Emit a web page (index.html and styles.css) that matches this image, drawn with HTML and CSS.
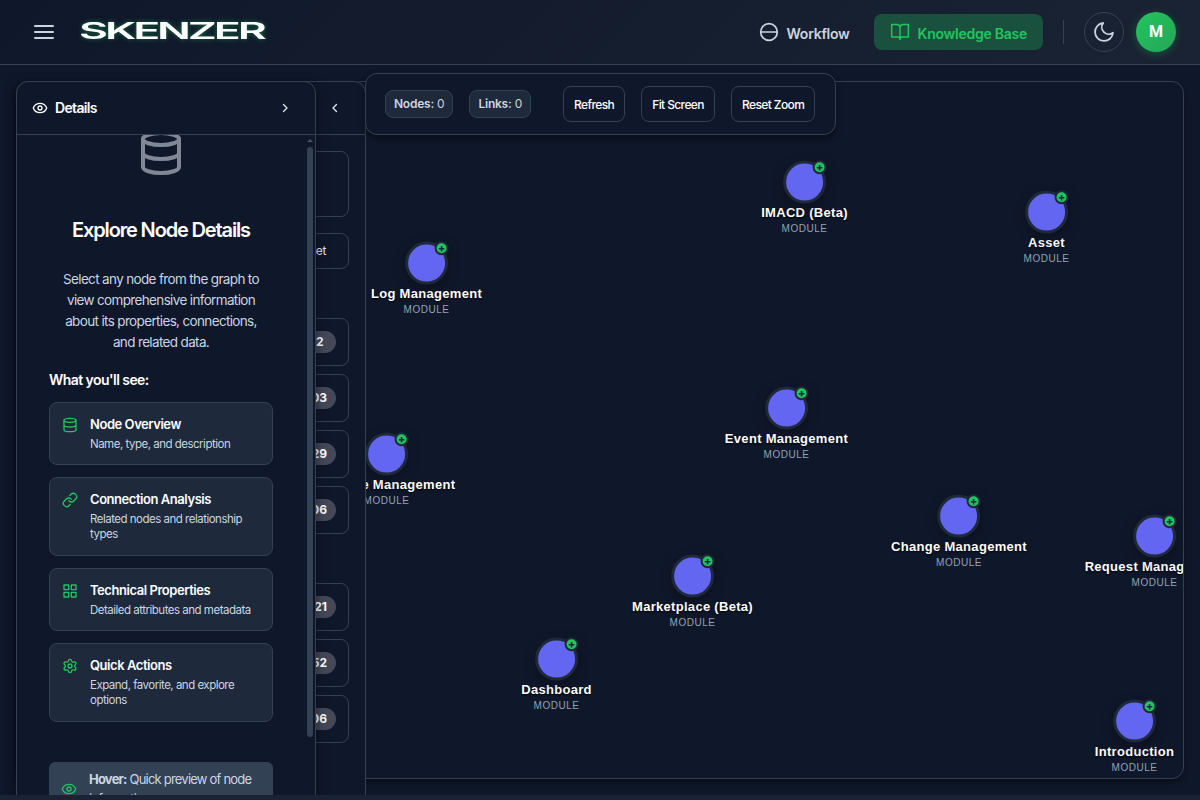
FILE: index.html
```html
<!DOCTYPE html>
<html lang="en">
<head>
<meta charset="utf-8">
<title>Skenzer – Knowledge Base</title>
<link rel="stylesheet" href="styles.css">
</head>
<body>
<svg class="sprite" aria-hidden="true">
  <symbol id="eye" viewBox="0 0 24 24"><path d="M2.06 12.35a1 1 0 0 1 0-.7 10.75 10.75 0 0 1 19.88 0 1 1 0 0 1 0 .7 10.75 10.75 0 0 1-19.88 0"/><circle cx="12" cy="12" r="3"/></symbol>
  <symbol id="db" viewBox="0 0 24 24"><ellipse cx="12" cy="5" rx="9" ry="3"/><path d="M3 5v14a9 3 0 0 0 18 0V5M3 12a9 3 0 0 0 18 0"/></symbol>
  <symbol id="link" viewBox="0 0 24 24"><path d="M10 13a5 5 0 0 0 7.54.54l3-3a5 5 0 0 0-7.07-7.07l-1.72 1.71"/><path d="M14 11a5 5 0 0 0-7.54-.54l-3 3a5 5 0 0 0 7.07 7.07l1.71-1.71"/></symbol>
  <symbol id="grid" viewBox="0 0 24 24"><path d="M3 3h7v7H3zM14 3h7v7h-7zM14 14h7v7h-7zM3 14h7v7H3z"/></symbol>
  <symbol id="gear" viewBox="0 0 24 24"><path d="M9.67 4.14a2.34 2.34 0 0 1 4.66 0 2.34 2.34 0 0 0 3.32 1.91 2.34 2.34 0 0 1 2.33 4.03 2.34 2.34 0 0 0 0 3.84 2.34 2.34 0 0 1-2.33 4.03 2.34 2.34 0 0 0-3.32 1.91 2.34 2.34 0 0 1-4.66 0 2.34 2.34 0 0 0-3.32-1.91 2.34 2.34 0 0 1-2.33-4.03 2.34 2.34 0 0 0 0-3.84 2.34 2.34 0 0 1 2.33-4.03 2.34 2.34 0 0 0 3.32-1.91"/><circle cx="12" cy="12" r="3"/></symbol>
</svg>
<header class="topbar">
  <div class="topbar-left">
    <svg class="icon menu" viewBox="0 0 20 16"><path d="M1 2h18M1 8h18M1 14h18"/></svg>
    <div class="logo"><span>SKENZER</span></div>
  </div>
  <nav class="topbar-right">
    <a class="nav-item"><svg class="icon i20" viewBox="0 0 20 20"><circle cx="10" cy="10" r="8.3"/><path d="M1.7 10h16.6"/></svg><span>Workflow</span></a>
    <a class="nav-item active"><svg class="icon i20" viewBox="0 0 24 24"><path d="M2 3h6a4 4 0 0 1 4 4v14a3 3 0 0 0-3-3H2zM22 3h-6a4 4 0 0 0-4 4v14a3 3 0 0 1 3-3h7z"/></svg><span>Knowledge Base</span></a>
    <i class="divider"></i>
    <button class="theme"><svg class="icon" viewBox="0 0 24 24"><path d="M21 12.79A9 9 0 1 1 11.21 3 7 7 0 0 0 21 12.79z"/></svg></button>
    <div class="avatar">M</div>
  </nav>
</header>
<main class="stage">
  <section class="graph" id="graph"></section>

  <aside class="filters">
    <div class="panel-head end"><svg class="icon chev" viewBox="0 0 14 14"><path d="M8.5 3.5 5 7l3.5 3.5"/></svg></div>
    <div class="filter-body">
      <div class="box search"></div>
      <div class="box reset">Reset</div>
      <div class="group">
        <div class="box row"><b class="short">12</b></div><div class="box row"><b>103</b></div><div class="box row"><b>129</b></div><div class="box row"><b>106</b></div>
      </div>
      <div class="group">
        <div class="box row"><b>121</b></div><div class="box row"><b>152</b></div><div class="box row"><b>106</b></div>
      </div>
    </div>
  </aside>

  <div class="toolbar">
    <span class="stat"><b>Nodes:</b> 0</span>
    <span class="stat"><b>Links:</b> 0</span>
    <div class="actions"><button>Refresh</button><button>Fit Screen</button><button>Reset Zoom</button></div>
  </div>

  <aside class="details">
    <div class="panel-head">
      <div class="title"><svg class="icon"><use href="#eye"/></svg><span>Details</span></div>
      <svg class="icon chev" viewBox="0 0 14 14"><path d="M5.5 3.5 9 7l-3.5 3.5"/></svg>
    </div>
    <div class="details-body">
      <div class="scroll-content">
        <svg class="icon hero"><use href="#db"/></svg>
        <h2>Explore Node Details</h2>
        <p class="intro">Select any node from the graph to view comprehensive information about its properties, connections, and related data.</p>
        <h3>What you'll see:</h3>
        <ul class="cards">
          <li><svg class="icon"><use href="#db"/></svg><div><strong>Node Overview</strong><span>Name, type, and description</span></div></li>
          <li><svg class="icon"><use href="#link"/></svg><div><strong>Connection Analysis</strong><span>Related nodes and relationship types</span></div></li>
          <li><svg class="icon"><use href="#grid"/></svg><div><strong>Technical Properties</strong><span>Detailed attributes and metadata</span></div></li>
          <li><svg class="icon"><use href="#gear"/></svg><div><strong>Quick Actions</strong><span>Expand, favorite, and explore options</span></div></li>
        </ul>
        <div class="tip"><svg class="icon"><use href="#eye"/></svg><p><b>Hover:</b> Quick preview of node information</p></div>
      </div>
      <div class="scrollbar"><i class="arrow"></i><i class="thumb"></i></div>
    </div>
  </aside>
</main>
<footer class="bottom"></footer>
<script src="graph.js"></script>
</body>
</html>
```
FILE: styles.css
```css
* { box-sizing: border-box; }
html, body { height: 100%; }
body {
  margin: 0; display: flex; flex-direction: column; overflow: hidden;
  background: #0f172a; color: #fff; font-family: Inter, sans-serif; letter-spacing: -0.02em;
}
h2, h3, p, ul { margin: 0; padding: 0; }
button { font: inherit; letter-spacing: inherit; color: inherit; background: none; padding: 0; }
.sprite { display: none; }
.icon { display: block; flex: none; fill: none; stroke: currentColor; stroke-width: 2; stroke-linecap: round; stroke-linejoin: round; }

.topbar {
  flex: none; height: 65px; padding: 0 24px 0 34px; display: flex; align-items: center; justify-content: space-between;
  background: linear-gradient(135deg, #0f172a 0%, #1a2333 100%); border-bottom: 1px solid #334155;
}
.topbar-left { display: flex; align-items: center; gap: 25px; }
.menu { width: 20px; height: 16px; color: #cbd5e1; }
.logo { width: 186px; height: 24px; display: flex; align-items: center; }
.logo span {
  font-size: 23.5px; line-height: 22px; padding-bottom: 2px; font-weight: 600; letter-spacing: -0.07em;
  transform: scaleX(1.9); transform-origin: 0 50%; text-shadow: 0 0 4px rgba(34, 197, 94, .5);
}
.topbar-right { display: flex; align-items: center; }
.nav-item { display: flex; align-items: center; gap: 8px; height: 36px; padding: 0 16px; border-radius: 8px; font-size: 14px; font-weight: 600; letter-spacing: -0.018em; color: #cbd5e1; }
.nav-item span { padding-top: 2px; }
.nav-item.active { margin-left: 8px; background: #1a513e; color: #22c55e; }
.i20 { width: 20px; height: 20px; stroke-width: 1.7; }
.divider { width: 1px; height: 24px; margin: 0 20px; background: #334155; }
.theme { width: 40px; height: 40px; border: 1px solid #334155; border-radius: 50%; display: grid; place-items: center; color: #cbd5e1; }
.theme svg { width: 24px; height: 24px; stroke-width: 1.8; }
.avatar { width: 40px; height: 40px; margin-left: 12px; border-radius: 50%; display: grid; place-items: center; font: 700 16px/1 Roboto, sans-serif; letter-spacing: 0; background: linear-gradient(135deg, #22c55e, #26a558); box-shadow: 0 2px 8px rgba(34, 197, 94, .3); }

.stage { position: relative; flex: 1; min-height: 0; padding: 16px; overflow: hidden; }
.graph { position: relative; height: 698px; margin-left: 334px; border: 1px solid #334155; border-radius: 12px; overflow: hidden; }
.stage::before { content: ""; position: absolute; left: 16px; right: 16px; top: 16px; height: 698px; border-radius: 12px; box-shadow: 0 4px 6px rgba(0, 0, 0, .4); }

.node { position: absolute; width: 0; display: flex; flex-direction: column; align-items: center; white-space: nowrap; font-family: "Liberation Sans", Arial, sans-serif; }
.disc { display: block; flex: none; width: 44px; height: 44px; margin-top: -22px; overflow: visible; filter: drop-shadow(0 4px 6px rgba(0, 0, 0, .3)); }
.ball { fill: #6366f1; stroke: #1e293b; stroke-width: 3; }
.badge { fill: #22c55e; stroke: #1e293b; stroke-width: 2; }
.plus { stroke: #1e293b; stroke-width: 1.6; }
.node strong { margin-top: 1px; font-size: 13px; line-height: 16px; letter-spacing: .3px; text-shadow: 0 1px 2px #000; }
.node small { font-size: 10px; line-height: 12px; letter-spacing: .5px; margin-top: 2px; color: #94a3b8; }

.filters, .details { position: absolute; top: 16px; left: 16px; height: 740px; border: 1px solid #334155; border-radius: 12px; background: #0f172a; overflow: hidden; }
.filters { width: 350px; }
.details { width: 300px; box-shadow: 0 4px 12px rgba(0, 0, 0, .5); display: flex; flex-direction: column; }
.panel-head { flex: none; height: 53px; padding: 0 23.5px 0 15px; display: flex; align-items: center; justify-content: space-between; border-bottom: 1px solid #334155; }
.panel-head.end { justify-content: flex-end; }
.title { display: flex; align-items: center; gap: 7px; font-size: 14px; line-height: 16px; font-weight: 600; letter-spacing: -.65px; }
.title svg { width: 16px; height: 16px; }
.chev { width: 14px; height: 14px; stroke-width: 1.3; color: #e2e8f0; }
.filter-body { padding: 16px 16px 0; }
.box { border: 1px solid #334155; border-radius: 8px; }
.search { height: 66px; }
.reset { margin-top: 16px; height: 36px; padding: 0 22px 1px 0; display: flex; align-items: center; justify-content: flex-end; font-size: 12px; color: #e2e8f0; }
.group { margin-top: 49px; display: grid; gap: 8px; }
.row { height: 48px; padding-right: 12px; display: flex; align-items: center; justify-content: flex-end; }
.row b { height: 22px; padding: 0 9px 0 10px; border-radius: 11px; background: #454858; font-size: 12px; line-height: 22px; letter-spacing: 0; }
.row .short { padding-right: 12.5px; }

.toolbar { position: absolute; top: 8px; left: 365px; width: 471px; height: 62px; padding-left: 19px; display: flex; align-items: center; gap: 16px; border: 1px solid #334155; border-radius: 12px; background: #0f172a; box-shadow: 0 4px 6px rgba(0, 0, 0, .4); font-size: 12px; }
.stat { height: 28px; padding: 0 8px; line-height: 26px; border: 1px solid #334155; border-radius: 8px; background: #1e293b; color: #cbd5e1; letter-spacing: -0.02em; }
.stat b { font-weight: 600; }
.actions { margin-left: 16px; display: flex; gap: 16px; }
.actions button { height: 36px; padding: 0 10px; border: 1px solid #334155; border-radius: 8px; font-weight: 500; letter-spacing: -.6px; }

.details-body { flex: 1; min-height: 0; display: flex; }
.scroll-content { flex: 1; padding: 0 34px 0 32px; overflow: hidden; display: flex; flex-direction: column; }
.hero { width: 48px; height: 48px; margin: -6px auto 0; color: #808896; }
h2 { margin-top: 40px; text-align: center; font-size: 20px; line-height: 26px; font-weight: 600; letter-spacing: -1.15px; }
.intro { margin: 26px 8px 0; text-align: center; font-size: 13.5px; line-height: 21px; letter-spacing: -.65px; color: #cbd5e1; }
h3 { margin: 16px 0 12px; font-size: 14px; line-height: 21px; font-weight: 600; letter-spacing: -.55px; }
.cards { list-style: none; display: grid; gap: 12px; }
.cards li { display: flex; gap: 12px; padding: 12px; border: 1px solid #334155; border-radius: 8px; background: #1e293b; }
.cards .icon { width: 16px; height: 16px; margin-top: 2px; color: #22c55e; }
.cards strong, .cards span { display: block; }
.cards strong { font-size: 13px; line-height: 19.2px; font-weight: 600; letter-spacing: -.45px; }
.cards span { margin-top: 2.4px; font-size: 11.5px; line-height: 15.6px; letter-spacing: -.5px; color: #cbd5e1; }
.tip { flex: none; margin-top: 40px; height: 54px; padding: 0 12px; display: flex; align-items: center; gap: 12px; border-radius: 6px; background: #334155; color: #cbd5e1; font-size: 13px; line-height: 20px; letter-spacing: -.79px; }
.tip .icon { width: 16px; height: 16px; color: #22c55e; }
.scrollbar { width: 8px; margin-right: 0; }
.arrow { display: block; width: 6px; height: 3px; margin: 4px 0 5px; background: #475569; clip-path: polygon(50% 0, 100% 100%, 0 100%); }
.thumb { display: block; width: 6px; height: 590px; border-radius: 3px; background: #334155; }
.bottom { flex: none; height: 5px; background: #1a2336; }
```
FILE: graph.js
```js
const nodes = [
  ['IMACD (Beta)', 804.5, 182], ['Asset', 1046.5, 212], ['Log Management', 426.5, 263],
  ['Event Management', 786.5, 408], ['Release Management', 386.5, 454],
  ['Change Management', 959, 516], ['Request Management', 1154.5, 536],
  ['Marketplace (Beta)', 692.5, 576], ['Dashboard', 556.5, 659], ['Introduction', 1134.5, 721],
];
const graph = document.getElementById('graph');
for (const [name, x, y] of nodes) {
  const el = document.createElement('div');
  el.className = 'node';
  el.style.left = `${x - 351}px`;
  el.style.top = `${y - 82}px`;
  el.innerHTML = `<svg class="disc" viewBox="-22 -22 44 44">
    <circle class="ball" cx="-.4" cy=".1" r="20"/>
    <circle class="badge" cx="14.6" cy="-14.7" r="6"/>
    <path class="plus" d="M11.8-14.2h5.6M14.6-17v5.6"/>
  </svg><strong>${name}</strong><small>MODULE</small>`;
  graph.append(el);
}
```
